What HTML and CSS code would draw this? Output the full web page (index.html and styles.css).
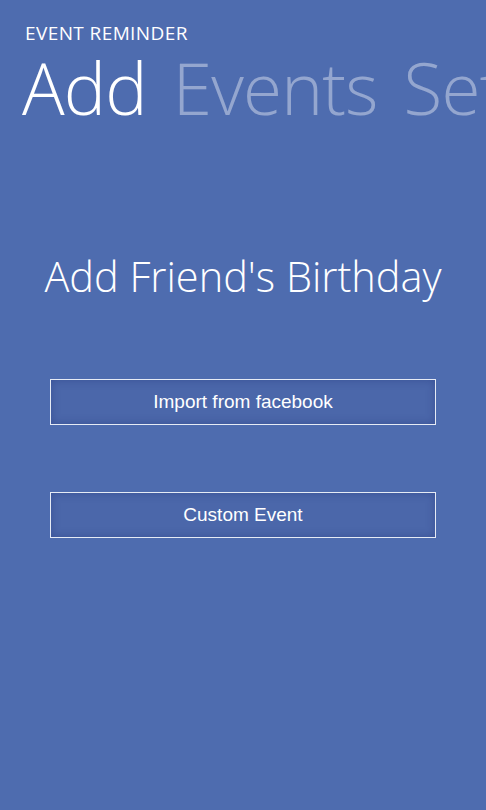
FILE: index.html
```html
<!DOCTYPE html>
<html lang="en">
  <head>
    <meta charset="UTF-8" />
    <title>Event Reminder</title>
    <link rel="stylesheet" href="styles.css">
  </head>
  <body>
    <div id="app">
      <div class="app-title">EVENT REMINDER</div>
      <div class="pivot">
        <span class="pivot-item active">Add</span>
        <span class="pivot-item">Events</span>
        <span class="pivot-item">Settings</span>
      </div>

      <div id="content">
        <h1 class="heading">Add Friend's Birthday</h1>
        <button class="btn">Import from facebook</button>
        <button class="btn">Custom Event</button>
      </div>
    </div>
  </body>
</html>
```

FILE: styles.css
```css
body {
  margin: 0;
  padding: 0;
  background-color: #4e6caf;
  color: #ffffff;
  font-family: "Open Sans", "Noto Sans", sans-serif;
  overflow: hidden;
}

#app {
  height: 810px;
}

.app-title {
  padding: 22px 0 0 25px;
  font-size: 19px;
  letter-spacing: 0.4px;
  line-height: 22px;
}

.pivot {
  display: flex;
  gap: 26px;
  white-space: nowrap;
  padding-left: 22px;
  margin-top: 9px;
  font-size: 71px;
  font-weight: 300;
  letter-spacing: -0.8px;
  line-height: 70px;
}

.pivot-item {
  color: rgba(255, 255, 255, 0.4);
}

.pivot-item.active {
  color: #ffffff;
}

#content {
  display: flex;
  flex-direction: column;
  align-items: center;
  padding-top: 125px;
}

.heading {
  margin: 0 0 75px 0;
  font-size: 41.5px;
  font-weight: 300;
  line-height: 56px;
}

.btn {
  width: 386px;
  height: 46px;
  margin-bottom: 67px;
  background-color: #4b67aa;
  border: 1px solid #e6ebf5;
  box-shadow: inset 0 0 8px rgba(40, 60, 130, 0.5);
  color: #ffffff;
  font-family: "Liberation Sans", Arial, sans-serif;
  font-size: 19px;
  cursor: pointer;
}
```
